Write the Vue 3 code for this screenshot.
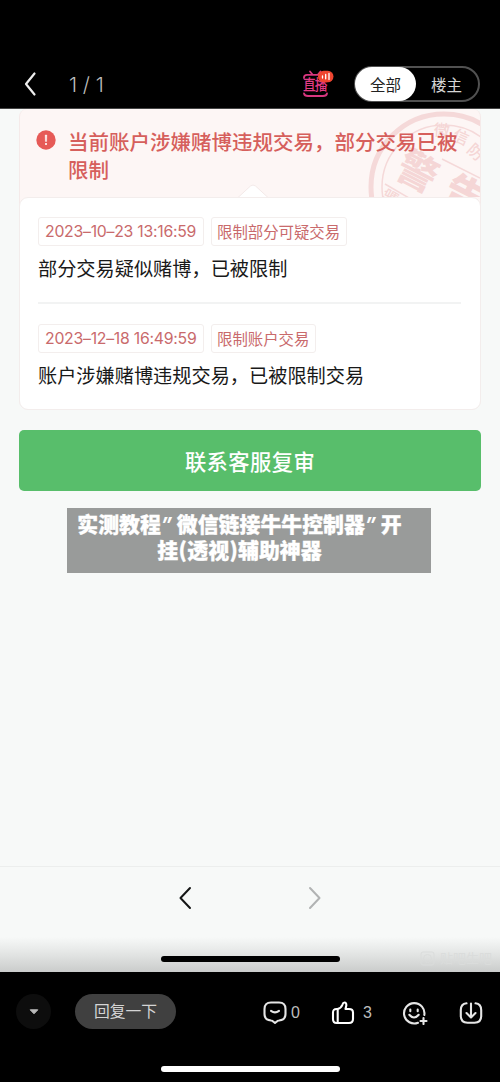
<script setup>
const records = [
  { time: '2023–10–23 13:16:59', tag: '限制部分可疑交易', text: '部分交易疑似赌博，已被限制' },
  { time: '2023–12–18 16:49:59', tag: '限制账户交易', text: '账户涉嫌赌博违规交易，已被限制交易' },
]
</script>

<template>
  <div class="screen">
    <header class="topbar">
      <svg class="back" width="14" height="26" viewBox="0 0 14 26"><path d="M11.5 2.5 3 13l8.5 10.5" /></svg>
      <span class="count">1 / 1</span>
      <svg class="live" width="32" height="30" viewBox="0 0 32 30">
        <g fill="none" stroke="#d8377f" stroke-width="1.8" stroke-linecap="round" stroke-linejoin="round">
          <path d="M2 8V7.500Q2 4.800 5 4.800H17M8 1.500 10.500 4.500M18.500 1.500 16 4.500" />
          <path d="M2 23.500Q2.500 26 6 26H21Q24.500 26 25 23.500" />
        </g>
        <text x="1" y="17.600" textLength="24.500" font-size="12.800" font-weight="500" fill="#e23b85" transform="scale(1 1.160)">直播</text>
        <rect x="16" y="0.800" width="15.500" height="11.500" rx="5.700" fill="#ee4530" />
        <path d="M20.500 6v2M23.700 4.500v4.300M27 3.500v6" stroke="#fff" stroke-width="1.300" stroke-linecap="round" />
      </svg>
      <div class="switch"><span class="seg on">全部</span><span class="seg">楼主</span></div>
    </header>

    <main class="page">
      <section class="card">
        <div class="alert">
          <svg class="stamp" width="112" height="89" viewBox="0 0 112 89">
            <g fill="none" stroke="#f5d9d9">
              <circle cx="76" cy="78" r="73" stroke-width="5" />
              <circle cx="76" cy="78" r="62" stroke-width="1.500" />
              <path d="M17 75 41 89M74 50l38 19" stroke-width="1.500" />
            </g>
            <g fill="#f5d6d6" font-weight="900" text-anchor="middle">
              <text font-size="40" transform="translate(50 62) rotate(27)" y="15">警</text>
              <text font-size="40" transform="translate(97 86) rotate(27)" y="15">告</text>
              <g font-weight="500" font-size="16">
                <text transform="translate(74 21) rotate(4)" y="6">微</text>
                <text transform="translate(93 28) rotate(24)" y="6">信</text>
                <text transform="translate(108 43) rotate(42)" y="6">防</text>
                <text transform="translate(22 88) rotate(-60)" y="6">骗</text>
              </g>
            </g>
          </svg>
          <svg class="warn" width="20" height="20" viewBox="0 0 20 20">
            <circle cx="10" cy="10" r="9.700" fill="#e65a57" />
            <path d="M9.200 5h1.600l-.2 6.500H9.400z" fill="#fff" stroke="#fff" stroke-width=".4" /><circle cx="10" cy="14" r="1.100" fill="#fff" />
          </svg>
          <h1>当前账户涉嫌赌博违规交易，部分交易已被限制</h1>
          <svg class="notch" width="30" height="14" viewBox="0 0 30 14"><path d="M0 13.500 12.500 2q2.500-2 5 0L30 13.500" fill="#fff" stroke="#f3e9e8" /></svg>
        </div>
        <div class="records">
          <article v-for="r in records" :key="r.time" class="record">
            <div class="tags"><span class="tag time">{{ r.time }}</span><span class="tag">{{ r.tag }}</span></div>
            <p>{{ r.text }}</p>
          </article>
        </div>
      </section>
      <button class="contact">联系客服复审</button>
      <div class="caption">
        <div>实测教程<i>”</i>微信链接牛牛控制器<i>”</i>开</div>
        <div>挂<b>(</b>透视<b>)</b>辅助神器</div>
      </div>
      <footer class="browser">
        <div class="nav">
          <svg width="14" height="24" viewBox="0 0 14 24"><path d="M12 2 2.500 12 12 22" stroke="#151616" /></svg>
          <svg width="14" height="24" viewBox="0 0 14 24"><path d="M2 2 11.500 12 2 22" stroke="#b1b3b3" /></svg>
        </div>
        <div class="home dark"></div>
        <span class="mark">
          <svg width="15" height="15" viewBox="0 0 15 15"><rect x="1" y="1" width="13" height="13" rx="2" /><circle cx="7.500" cy="7.500" r="4" /></svg>
          贴吧生吧
        </span>
      </footer>
    </main>

    <section class="toolbar">
      <span class="drop"><svg width="10" height="6" viewBox="0 0 10 6"><path d="M1.200.8h7.600L5 4.800z" fill="#bbb" stroke="#bbb" stroke-linejoin="round" /></svg></span>
      <span class="reply">回复一下</span>
      <svg class="ic comment" width="24" height="24" viewBox="0 0 24 24"><path d="M8 1.500h8q6.500 0 6.500 6.500v5q0 6-6.500 6.500-1.500 0-2.500 1.300l-1.500 1.200-1.500-1.200Q9.500 19.500 8 19.500 1.500 19 1.500 13V8q0-6.500 6.500-6.500z" /><path d="M8 9.800q4 3 8 0" /></svg>
      <span class="num n0">0</span>
      <svg class="ic like" width="24" height="24" viewBox="0 0 24 24"><path d="M6.500 8H5.500Q2 8 2 11.500v6.500q0 4 3.500 4H18q4 0 4-4v-6.500q0-3.500-4-3.500h-3.500l.8-3.500Q15.500 1.500 13.500 1.500q-1.500 0-2 2Q10.500 7 6.500 8zM6.700 8v14" /></svg>
      <span class="num n3">3</span>
      <svg class="ic smile" width="26" height="24" viewBox="0 0 26 24"><path d="M16 21.800A10.200 10.200 0 1 1 22.300 14" /><path d="M8.300 8.500v1.800M15.700 8.500v1.800M7.300 13.800q4.700 5.300 9.400 0M21.500 17v6M18.500 20h6" /></svg>
      <svg class="ic save" width="24" height="24" viewBox="0 0 24 24"><path d="M7.500 2.300Q1.800 3 1.800 9v6q0 6.700 6.700 6.700h7q6.700 0 6.700-6.700V9q0-6-5.700-6.700M12 2.500V16M7.500 12l4.500 4.500 4.500-4.500" /></svg>
      <div class="home light"></div>
    </section>
  </div>
</template>

<style scoped>
.screen { width: 500px; height: 1082px; display: flex; flex-direction: column; background: #000; overflow: hidden; font-family: "Liberation Sans", "Noto Sans CJK SC", sans-serif; }
.screen * { box-sizing: border-box; }
svg { display: block; flex: none; }
svg text { font-family: "Noto Sans CJK SC", sans-serif; }
.topbar { height: 109px; flex: none; display: flex; align-items: center; padding: 60px 20px 0 23px; border-bottom: 1px solid #444; }
.back path { fill: none; stroke: #eee; stroke-width: 2.2; stroke-linecap: round; stroke-linejoin: round; }
.count { margin-left: 32px; width: 60px; font: 20.5px Inter, sans-serif; color: #bdbdbd; white-space: nowrap; font-weight: 300; }
.live { margin: 1px 0 0 173px; }
.switch { margin-left: 20px; width: 126px; height: 36px; border: 2px solid #515151; border-radius: 18px; display: flex; background: #000; }
.seg { width: 63px; height: 34px; margin: -1px 0 0 -1px; border-radius: 17px; font: 15.5px/34px "Noto Sans CJK SC", sans-serif; color: #d5d5d5; text-align: center; }
.seg.on { width: 61px; background: #fff; color: #222; }
.page { height: 863px; flex: none; background: #f7f9f8; display: flex; flex-direction: column; align-items: center; }
.card { width: 462px; height: 301px; flex: none; border: 1px solid #f5eae9; border-top: 0; border-radius: 8px 8px 10px 10px; background: #fdf6f5; }
.alert { height: 88px; position: relative; display: flex; padding: 18px 0 0 16px; overflow: hidden; border-radius: 8px 8px 0 0; }
.stamp { position: absolute; right: 0; top: 0; }
.warn { margin-top: 3px; }
h1 { position: relative; margin: 0 0 0 12px; width: 394px; font: 500 20.5px/28px "Noto Sans CJK SC", sans-serif; color: #d65f5c; }
.notch { position: absolute; left: 218px; bottom: -1px; }
.records { height: 213px; margin: 0 -1px; background: #fff; border: 1px solid #f3edec; border-radius: 9px; padding: 19px 19px 0 18px; }
.record { height: 86px; }
.record + .record { border-top: 2px solid #f2f3f3; margin-top: -1px; padding-top: 20px; }
.tags { display: flex; gap: 7px; }
.tag { height: 29px; border: 1px solid #f3eeed; border-radius: 3px; padding: 0 6px 0 5px; font: 15.4px/26px "Noto Sans CJK SC", sans-serif; color: #c96a6c; white-space: nowrap; }
.time { width: 166px; padding-left: 6px; font: 15.8px/27px Inter, sans-serif; letter-spacing: -.25px; }
p { margin: 7px 0 0; font: 19.2px/30px "Noto Sans CJK SC", sans-serif; color: #191919; white-space: nowrap; }
.contact { margin-top: 20px; width: 462px; height: 61px; flex: none; border: 0; border-radius: 5px; background: #58be6b; color: #fff; font: 500 21.3px/58px "Noto Sans CJK SC", sans-serif; letter-spacing: .4px; padding: 0; }
.caption { margin: 17px 2px 0 0; width: 364px; height: 65px; flex: none; background: #999b9a; color: #fff; padding: 2px 19px 0 0; text-align: center; font: 900 20.9px/26px "Noto Sans CJK SC", sans-serif; white-space: nowrap; -webkit-text-stroke: .3px #fff; }
.caption i { display: inline-block; width: 16px; font: italic 700 20px/20px Inter, sans-serif; text-align: left; -webkit-text-stroke: 0; }
.caption b { display: inline-block; width: 9px; font-weight: 900; line-height: 20px; }
.browser { position: relative; margin-top: auto; width: 500px; height: 106px; flex: none; border-top: 1px solid #eceeed; background: linear-gradient(#f7f9f8 0 70px, #e4e6e5 86px, #cacccb 105px); }
.nav { display: flex; gap: 116px; padding: 19px 0 0 178px; }
.nav path { fill: none; stroke-width: 2; stroke-linecap: round; stroke-linejoin: round; }
.home { width: 179px; height: 6px; border-radius: 3px; margin-left: 161px; }
.dark { background: #000; margin-top: 46px; }
.mark { position: absolute; right: 8px; top: 83px; display: flex; align-items: center; gap: 5px; font: 13px/16px "Noto Sans CJK SC", sans-serif; color: #dadcdb; }
.mark svg { fill: none; stroke: #dadcdb; }
.toolbar { flex: 1; display: flex; align-items: flex-start; padding: 22px 0 0 16px; position: relative; }
.drop { width: 35px; height: 35px; border-radius: 50%; background: #0d0d0d; display: grid; place-items: center; }
.reply { margin-left: 24px; width: 101px; height: 35px; border-radius: 18px; background: #404040; color: #d4d4d4; text-align: center; font: 15.8px/34px "Noto Sans CJK SC", sans-serif; }
.ic { margin-top: 7px; fill: none; stroke: #e6e6e6; stroke-width: 2.1; stroke-linecap: round; stroke-linejoin: round; }
.comment { margin-left: 87px; }
.num { font: 16px/20px "Liberation Sans", sans-serif; color: #bdbdbd; margin-top: 9px; }
.n0 { margin-left: 4px; width: 9px; }
.like { margin-left: 31px; stroke: #fff; }
.n3 { margin-left: 8px; width: 9px; }
.smile { margin-left: 30px; }
.save { margin-left: 31px; }
.light { position: absolute; left: 0; bottom: 10px; background: #fff; }
</style>

<style>
body { background: #000; }
</style>
